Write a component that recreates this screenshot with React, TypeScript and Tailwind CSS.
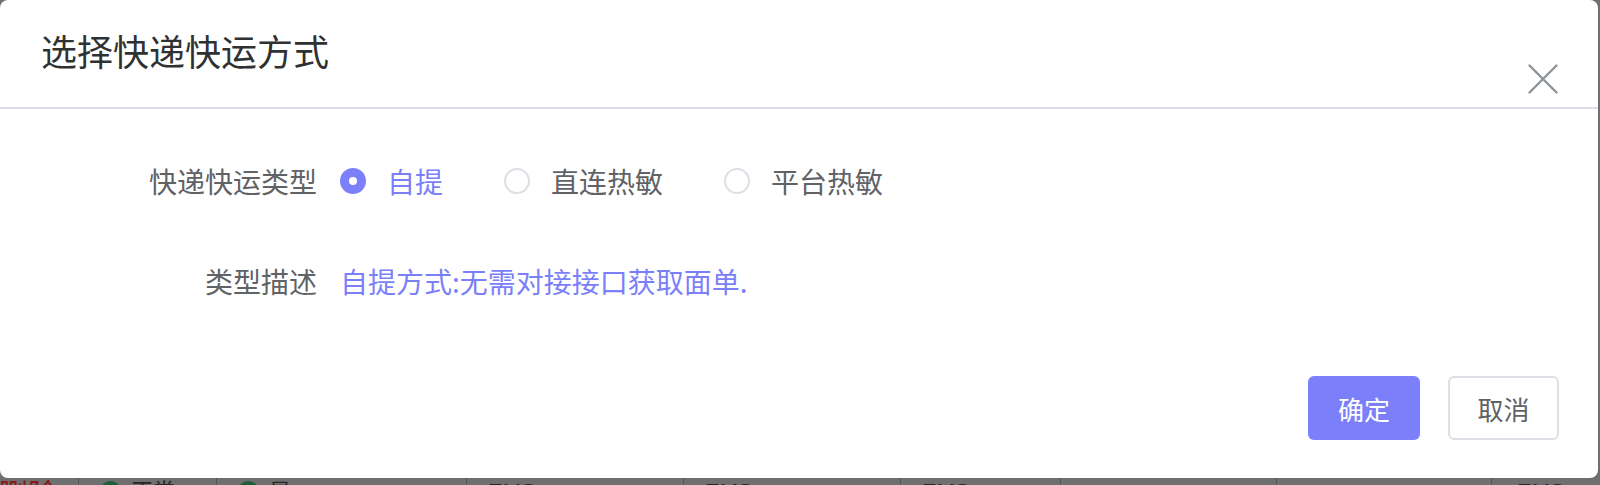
import React from "react";

const PURPLE = "#7b7ffa";

type RadioProps = { label: string; checked?: boolean };

const Radio: React.FC<RadioProps> = ({ label, checked }) => (
  <div className="flex items-center gap-[21px]">
    {checked ? (
      <span className="flex h-[26px] w-[26px] items-center justify-center rounded-full bg-[#7b7ffa]">
        <span className="h-[8px] w-[8px] rounded-full bg-white" />
      </span>
    ) : (
      <span className="h-[26px] w-[26px] rounded-full border-2 border-[#dcdfe6] bg-white" />
    )}
    <span className={checked ? "text-[#7b7ffa]" : "text-[#606266]"}>{label}</span>
  </div>
);

type CellProps = { w: number; children?: React.ReactNode };

const Cell: React.FC<CellProps> = ({ w, children }) => (
  <div
    className="flex h-full shrink-0 items-start gap-[10px] border-r border-[#4c5a5c] pl-[21px]"
    style={{ width: w }}
  >
    {children}
  </div>
);

const Dot = () => <span className="mt-[3px] h-[21px] w-[21px] shrink-0 rounded-full bg-[#1e5f3a]" />;

const Txt: React.FC<{ children: React.ReactNode }> = ({ children }) => (
  <span className="mt-[1px] text-[22px] leading-[26px] text-[#262626]">{children}</span>
);

export default function App() {
  return (
    <div
      className="flex h-[485px] w-[1600px] flex-col overflow-hidden bg-[#6f6f6f]"
      style={{ fontFamily: '"Noto Sans CJK SC", "Noto Sans", sans-serif' }}
    >
      <div className="flex h-[478px] w-[1598px] shrink-0 flex-col rounded-[8px] bg-white">
        <div className="flex h-[109px] shrink-0 items-start justify-between border-b-2 border-[#dcdfe6] pl-[41px] pr-[40px] pt-[26px]">
          <h2 className="text-[36px] leading-[48px] text-[#303133]">选择快递快运方式</h2>
          <button className="mt-[38px] h-[30px] w-[30px] text-[#909399]">
            <svg viewBox="0 0 30 30" width="30" height="30" fill="none" stroke="currentColor" strokeWidth="2.4" strokeLinecap="round">
              <path d="M1.5 1.5 L28.5 28.5 M28.5 1.5 L1.5 28.5" />
            </svg>
          </button>
        </div>

        <div className="flex flex-col pt-[52px] text-[28px] leading-[40px]">
          <div className="flex h-[40px] items-center">
            <div className="w-[317px] shrink-0 text-right text-[#606266]">快递快运类型</div>
            <div className="ml-[23px] flex items-center gap-[61px]">
              <Radio label="自提" checked />
              <Radio label="直连热敏" />
              <Radio label="平台热敏" />
            </div>
          </div>

          <div className="mt-[60px] flex h-[40px] items-center">
            <div className="w-[317px] shrink-0 text-right text-[#606266]">类型描述</div>
            <div className="ml-[23px]" style={{ color: PURPLE }}>
              自提方式:无需对接接口获取面单.
            </div>
          </div>
        </div>

        <div className="mt-auto flex justify-end gap-[28px] pb-[38px] pr-[39px]">
          <button className="h-[64px] w-[112px] rounded-[6px] bg-[#7b7ffa] text-[26px] text-white">
            确定
          </button>
          <button className="h-[64px] w-[111px] rounded-[6px] border-2 border-[#dcdfe6] bg-white text-[26px] text-[#606266]">
            取消
          </button>
        </div>
      </div>

      {/* table row behind the dialog, only its top edge shows */}
      <div className="flex h-[7px] shrink-0 overflow-hidden" style={{ fontFamily: '"Liberation Sans", "Noto Sans CJK SC", sans-serif' }}>
        <div className="flex h-full w-[79px] shrink-0 items-start border-r border-[#4c5a5c]">
          <span className="-ml-[2px] mt-[-1px] text-[30px] leading-[36px] text-[#8a1a1a]">删除</span>
        </div>
        <Cell w={138}>
          <Dot />
          <Txt>正常</Txt>
        </Cell>
        <Cell w={250}>
          <Dot />
          <Txt>是</Txt>
        </Cell>
        <Cell w={217}>
          <Txt>EMS</Txt>
        </Cell>
        <Cell w={217}>
          <Txt>EMS</Txt>
        </Cell>
        <Cell w={160}>
          <Txt>EMS</Txt>
        </Cell>
        <Cell w={216} />
        <Cell w={215} />
        <div className="flex h-full flex-1 items-start pl-[25px]">
          <Txt>EMS</Txt>
        </div>
      </div>
    </div>
  );
}
